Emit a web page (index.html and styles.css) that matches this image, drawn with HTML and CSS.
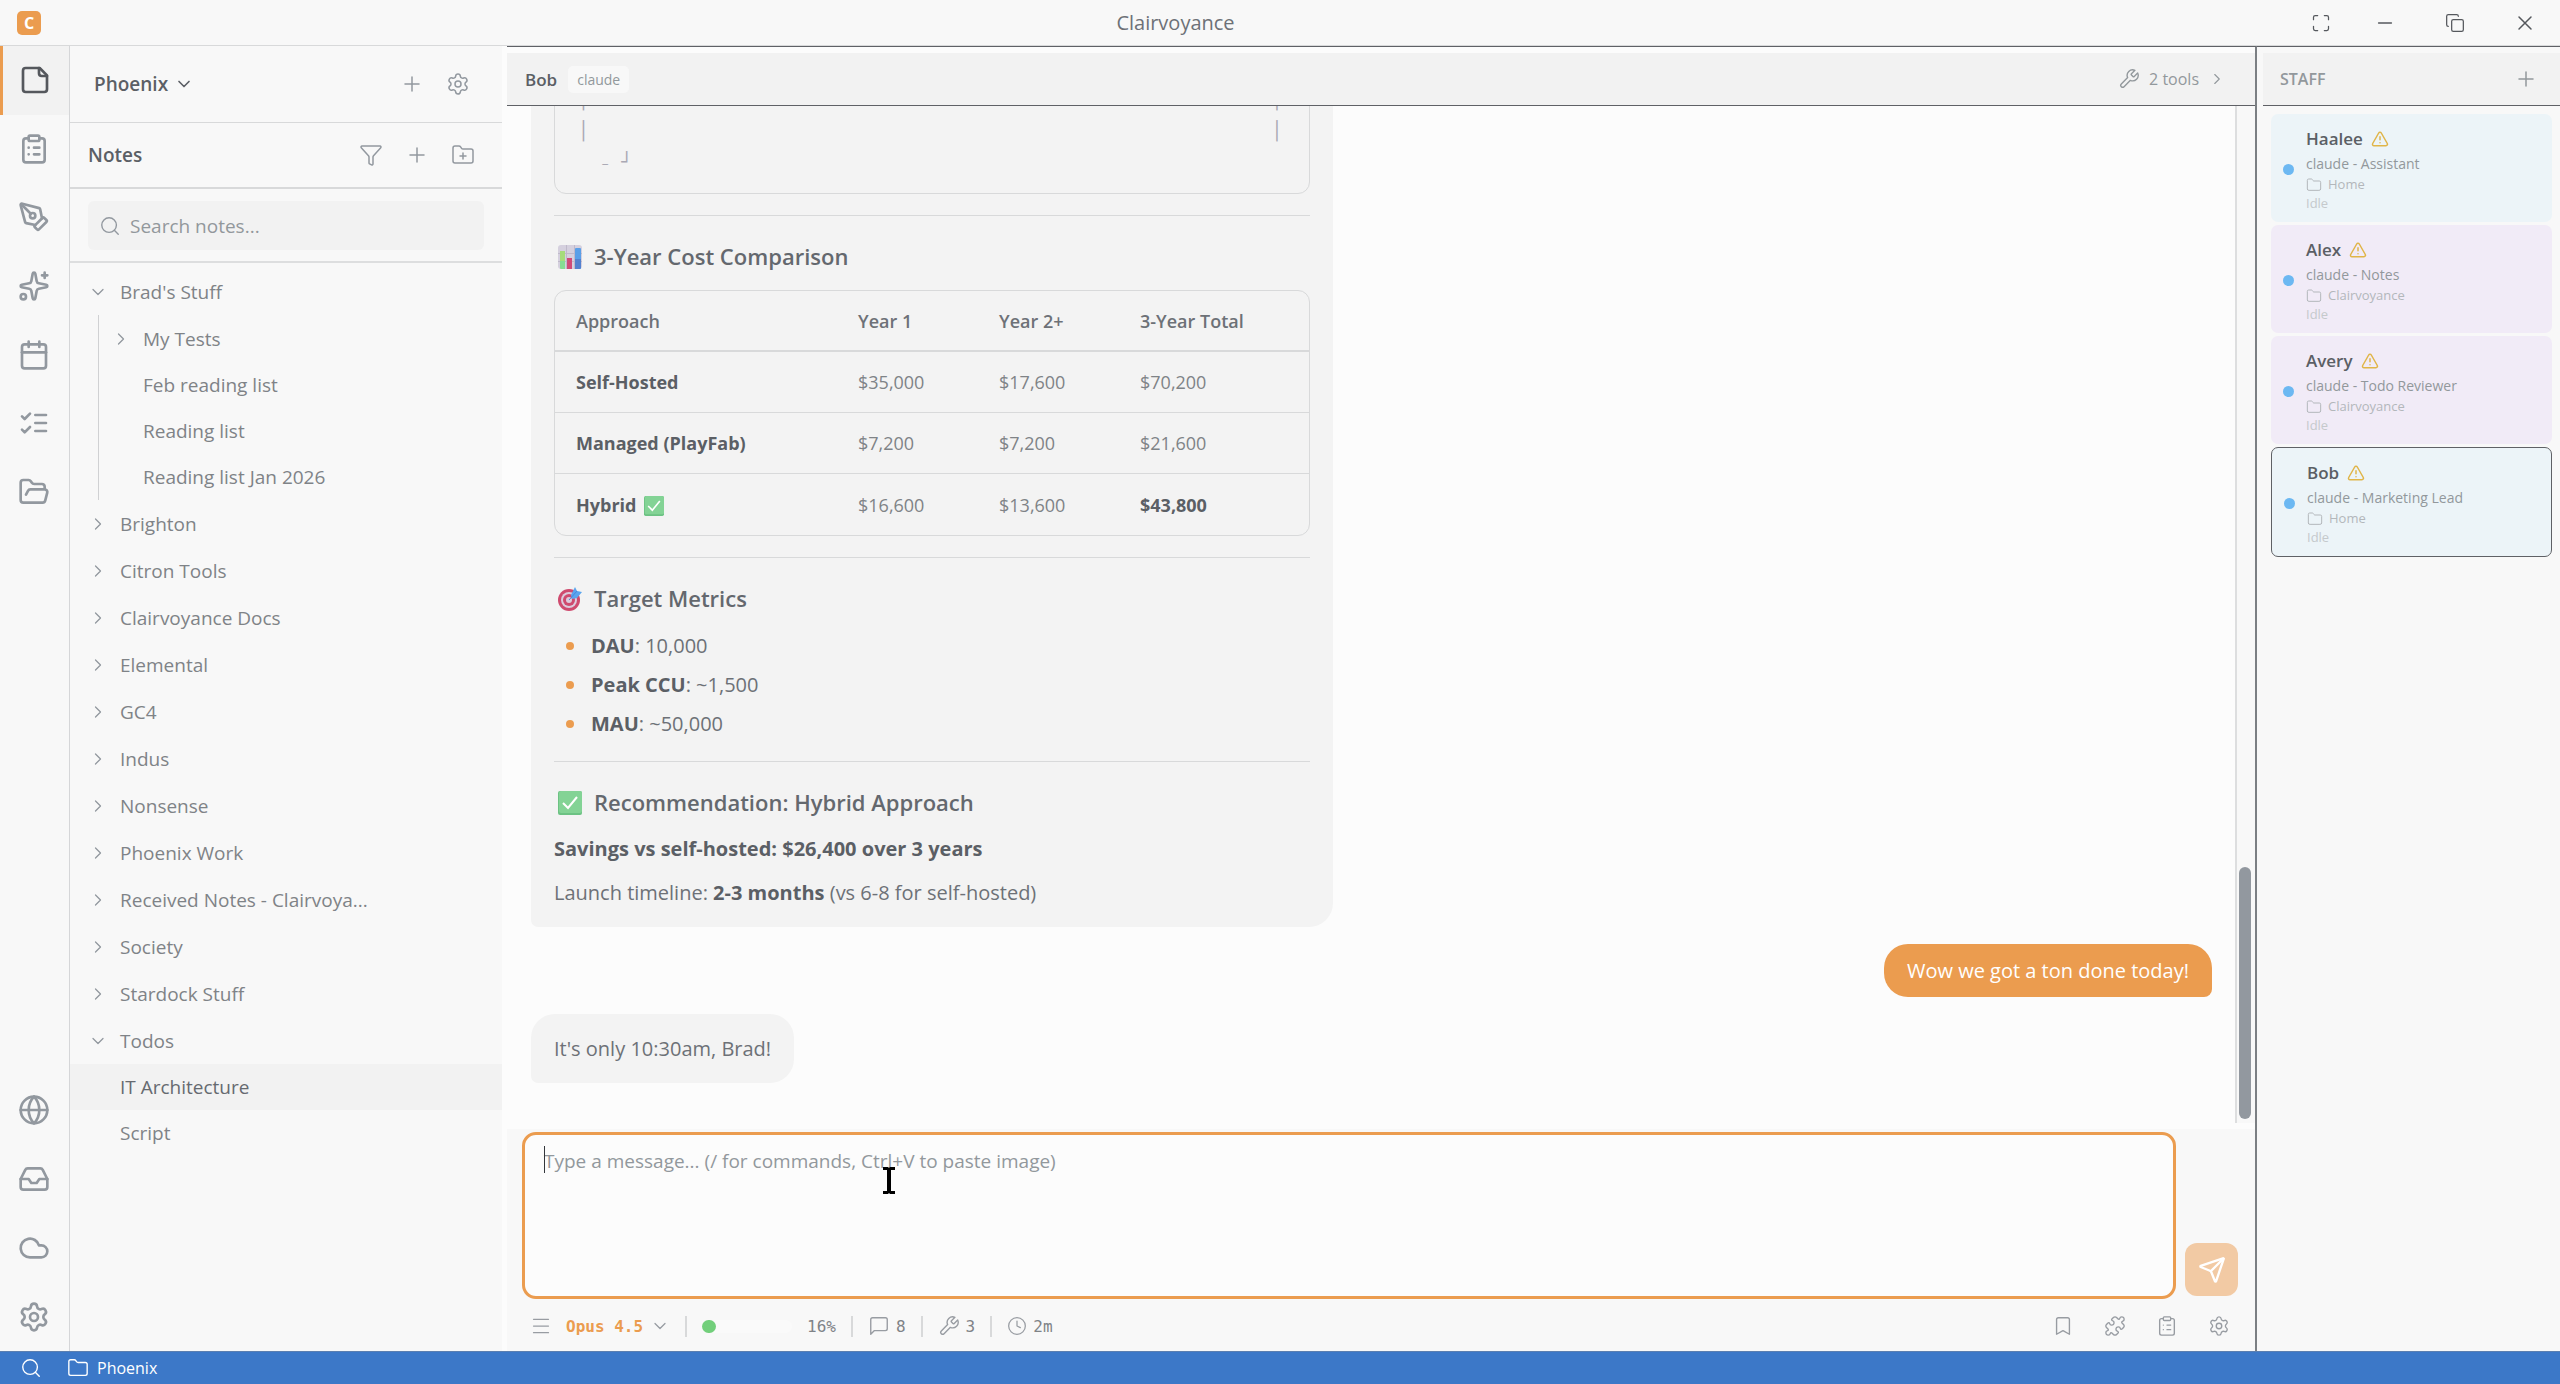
FILE: index.html
```
<!DOCTYPE html>
<html lang="en">
<head>
    <meta charset="UTF-8">
    <meta name="viewport" content="width=device-width, initial-scale=1.0">
    <title>Clairvoyance</title>
    <link rel="stylesheet" href="styles.css">
</head>
<body>
    <!-- Shared icons -->
    <svg class="sprite" aria-hidden="true">
        <symbol id="plus" viewBox="0 0 24 24"><path d="M5 12h14M12 5v14"/></symbol>
        <symbol id="chev-down" viewBox="0 0 24 24"><path d="m6 9 6 6 6-6"/></symbol>
        <symbol id="chev-right" viewBox="0 0 24 24"><path d="m9 18 6-6-6-6"/></symbol>
        <symbol id="note" viewBox="0 0 24 24"><path d="M15.5 3H5a2 2 0 0 0-2 2v14a2 2 0 0 0 2 2h14a2 2 0 0 0 2-2V8.500z"/><path d="M15 3v4a2 2 0 0 0 2 2h4"/></symbol>
        <symbol id="clipboard" viewBox="0 0 24 24"><rect x="8" y="2" width="8" height="4" rx="1"/><path d="M16 4h2a2 2 0 0 1 2 2v14a2 2 0 0 1-2 2H6a2 2 0 0 1-2-2V6a2 2 0 0 1 2-2h2M12 11h4M12 16h4M8 11h.01M8 16h.01"/></symbol>
        <symbol id="pen" viewBox="0 0 24 24"><path d="M15.707 21.293a1 1 0 0 1-1.414 0l-1.586-1.586a1 1 0 0 1 0-1.414l5.586-5.586a1 1 0 0 1 1.414 0l1.586 1.586a1 1 0 0 1 0 1.414z"/><path d="m18 13-1.375-6.874a1 1 0 0 0-.746-.776L3.235 2.028a1 1 0 0 0-1.207 1.207L5.350 15.879a1 1 0 0 0 .776.746L13 18"/><path d="m2.300 2.300 7.286 7.286"/><circle cx="11" cy="11" r="2"/></symbol>
        <symbol id="sparkles" viewBox="0 0 24 24"><path d="M11.017 2.814a1 1 0 0 1 1.966 0l1.051 5.558a2 2 0 0 0 1.594 1.594l5.558 1.051a1 1 0 0 1 0 1.966l-5.558 1.051a2 2 0 0 0-1.594 1.594l-1.051 5.558a1 1 0 0 1-1.966 0l-1.051-5.558a2 2 0 0 0-1.594-1.594l-5.558-1.051a1 1 0 0 1 0-1.966l5.558-1.051a2 2 0 0 0 1.594-1.594z"/><path d="M20 2v4M22 4h-4"/><circle cx="4" cy="20" r="2"/></symbol>
        <symbol id="calendar" viewBox="0 0 24 24"><path d="M8 2v4M16 2v4"/><rect x="3" y="4" width="18" height="18" rx="2"/><path d="M3 10h18"/></symbol>
        <symbol id="checks" viewBox="0 0 24 24"><path d="m3 17 2 2 4-4M3 7l2 2 4-4M13 6h8M13 12h8M13 18h8"/></symbol>
        <symbol id="folder-open" viewBox="0 0 24 24"><path d="m6 14 1.500-2.900A2 2 0 0 1 9.240 10H20a2 2 0 0 1 1.940 2.500l-1.540 6a2 2 0 0 1-1.950 1.500H4a2 2 0 0 1-2-2V5a2 2 0 0 1 2-2h3.900a2 2 0 0 1 1.690.9l.81 1.200a2 2 0 0 0 1.670.9H18a2 2 0 0 1 2 2v2"/></symbol>
        <symbol id="globe" viewBox="0 0 24 24"><circle cx="12" cy="12" r="10"/><path d="M12 2a14.500 14.500 0 0 0 0 20 14.500 14.500 0 0 0 0-20M2 12h20"/></symbol>
        <symbol id="inbox" viewBox="0 0 24 24"><path d="M22 12h-6l-2 3h-4l-2-3H2"/><path d="M5.450 5.110 2 12v6a2 2 0 0 0 2 2h16a2 2 0 0 0 2-2v-6l-3.450-6.890A2 2 0 0 0 16.760 4H7.240a2 2 0 0 0-1.790 1.110z"/></symbol>
        <symbol id="cloud" viewBox="0 0 24 24"><path d="M17.500 19H9a7 7 0 1 1 6.710-9h1.790a4.500 4.500 0 1 1 0 9Z"/></symbol>
        <symbol id="gear" viewBox="0 0 24 24"><path d="M9.671 4.136a2.340 2.340 0 0 1 4.659 0 2.340 2.340 0 0 0 3.319 1.915 2.340 2.340 0 0 1 2.330 4.033 2.340 2.340 0 0 0 0 3.831 2.340 2.340 0 0 1-2.330 4.033 2.340 2.340 0 0 0-3.319 1.915 2.340 2.340 0 0 1-4.659 0 2.340 2.340 0 0 0-3.320-1.915 2.340 2.340 0 0 1-2.330-4.033 2.340 2.340 0 0 0 0-3.831A2.340 2.340 0 0 1 6.350 6.051a2.340 2.340 0 0 0 3.319-1.915"/><circle cx="12" cy="12" r="3"/></symbol>
        <symbol id="funnel" viewBox="0 0 24 24"><path d="M10 20a1 1 0 0 0 .553.895l2 1A1 1 0 0 0 14 21v-7a2 2 0 0 1 .517-1.341L21.740 4.670A1 1 0 0 0 21 3H3a1 1 0 0 0-.742 1.670l7.225 7.989A2 2 0 0 1 10 14z"/></symbol>
        <symbol id="folder" viewBox="0 0 24 24"><path d="M20 20a2 2 0 0 0 2-2V8a2 2 0 0 0-2-2h-7.900a2 2 0 0 1-1.690-.9L9.600 3.900A2 2 0 0 0 7.930 3H4a2 2 0 0 0-2 2v13a2 2 0 0 0 2 2Z"/></symbol>
        <symbol id="folder-plus" viewBox="0 0 24 24"><path d="M12 10v6M9 13h6"/><path d="M20 20a2 2 0 0 0 2-2V8a2 2 0 0 0-2-2h-7.900a2 2 0 0 1-1.690-.9L9.600 3.900A2 2 0 0 0 7.930 3H4a2 2 0 0 0-2 2v13a2 2 0 0 0 2 2Z"/></symbol>
        <symbol id="search" viewBox="0 0 24 24"><circle cx="11" cy="11" r="8"/><path d="m21 21-4.300-4.300"/></symbol>
        <symbol id="wrench" viewBox="0 0 24 24"><path d="M14.700 6.300a1 1 0 0 0 0 1.400l1.600 1.600a1 1 0 0 0 1.400 0l3.770-3.770a6 6 0 0 1-7.940 7.940l-6.910 6.910a2.120 2.120 0 0 1-3-3l6.910-6.910a6 6 0 0 1 7.940-7.940l-3.760 3.760z"/></symbol>
        <symbol id="expand" viewBox="0 0 24 24"><path d="M8 3H5a2 2 0 0 0-2 2v3M21 8V5a2 2 0 0 0-2-2h-3M3 16v3a2 2 0 0 0 2 2h3M16 21h3a2 2 0 0 0 2-2v-3"/></symbol>
        <symbol id="minus" viewBox="0 0 24 24"><path d="M5 12h14"/></symbol>
        <symbol id="copy" viewBox="0 0 24 24"><rect x="8" y="8" width="14" height="14" rx="2"/><path d="M4 16c-1.100 0-2-.9-2-2V4c0-1.100.9-2 2-2h10c1.100 0 2 .9 2 2"/></symbol>
        <symbol id="close" viewBox="0 0 24 24"><path d="M18 6 6 18M6 6l12 12"/></symbol>
        <symbol id="alert" viewBox="0 0 24 24"><path d="m21.730 18-8-14a2 2 0 0 0-3.480 0l-8 14A2 2 0 0 0 4 21h16a2 2 0 0 0 1.730-3M12 9v4M12 17h.01"/></symbol>
        <symbol id="send" viewBox="0 0 24 24"><path d="M14.536 21.686a.5.5 0 0 0 .937-.024l6.500-19a.496.496 0 0 0-.635-.635l-19 6.500a.5.5 0 0 0-.024.937l7.930 3.180a2 2 0 0 1 1.112 1.110z"/><path d="m21.854 2.147-10.940 10.939"/></symbol>
        <symbol id="menu" viewBox="0 0 24 24"><path d="M3 4h18M3 12h18M3 20h18"/></symbol>
        <symbol id="chat" viewBox="0 0 24 24"><path d="M21 15a2 2 0 0 1-2 2H7l-4 4V5a2 2 0 0 1 2-2h14a2 2 0 0 1 2 2z"/></symbol>
        <symbol id="clock" viewBox="0 0 24 24"><circle cx="12" cy="12" r="10"/><path d="M12 6v6l4 2"/></symbol>
        <symbol id="bookmark" viewBox="0 0 24 24"><path d="m19 21-7-4-7 4V5a2 2 0 0 1 2-2h10a2 2 0 0 1 2 2z"/></symbol>
        <symbol id="puzzle" viewBox="0 0 24 24"><path d="M15.390 4.390a1 1 0 0 0 1.680-.474 2.500 2.500 0 1 1 3.014 3.015 1 1 0 0 0-.474 1.680l1.683 1.682a2.414 2.414 0 0 1 0 3.414L19.610 15.390a1 1 0 0 1-1.680-.474 2.500 2.500 0 1 0-3.014 3.015 1 1 0 0 1 .474 1.680l-1.683 1.682a2.414 2.414 0 0 1-3.414 0L8.610 19.610a1 1 0 0 0-1.680.474 2.500 2.500 0 1 1-3.014-3.015 1 1 0 0 0 .474-1.680l-1.683-1.682a2.414 2.414 0 0 1 0-3.414L4.390 8.610a1 1 0 0 1 1.680.474 2.500 2.500 0 1 0 3.014-3.015 1 1 0 0 1-.474-1.680l1.683-1.682a2.414 2.414 0 0 1 3.414 0z"/></symbol>
        <symbol id="check-box" viewBox="0 0 24 24"><rect width="24" height="24" rx="2" fill="#6cc283" stroke="none"/><rect x="1" width="23" height="22" rx="2" fill="#83d395" stroke="none"/><path d="m5 12 5 5 9-11" fill="none" stroke="#fff" stroke-width="2"/></symbol>
        <symbol id="chart" viewBox="0 0 24 24"><g stroke="none"><rect width="24" height="24" rx="3" fill="#d5d0de"/><path d="M0 8h24v1H0zM0 16h24v1H0zM8 0h1v24H8zM16 0h1v24h-1z" fill="#bfb9ca"/><path d="M2 6h5v18H3l-1-1z" fill="#a6dc7a"/><path d="M2 16h5v8H3l-1-1z" fill="#86dc94"/><rect x="9" y="13" width="5" height="11" fill="#d04a78"/><rect x="17" y="3" width="6" height="21" rx="1" fill="#5a9fe8"/><path d="M17 14h6v9l-1 1h-5z" fill="#5381cf"/></g></symbol>
        <symbol id="target" viewBox="0 0 24 24"><g stroke="none"><circle cx="11" cy="13" r="11" fill="#cf4a6e"/><circle cx="11" cy="13" r="8" fill="#dccbdc"/><circle cx="11" cy="13" r="6" fill="#cf4a6e"/><circle cx="11" cy="13" r="3" fill="#dccbdc"/><path d="m13 8 4-8 2 4 5 1-5 6-5 1z" fill="#5aa5ee"/></g><path d="m11 13 8-9" stroke="#4b86dc" stroke-width="1"/></symbol>
    </svg>

    <header class="titlebar">
        <span class="logo">C</span>
        <h1 class="app-title">Clairvoyance</h1>
        <div class="window-buttons">
            <button class="expand" aria-label="Full screen"><svg class="icon s20"><use href="#expand"/></svg></button>
            <button aria-label="Minimize"><svg class="icon s22"><use href="#minus"/></svg></button>
            <button aria-label="Restore"><svg class="icon s20"><use href="#copy"/></svg></button>
            <button aria-label="Close"><svg class="icon s24"><use href="#close"/></svg></button>
        </div>
    </header>

    <div class="workspace">
        <nav class="rail" aria-label="Views">
            <div class="rail-top">
                <button class="active" aria-label="Notes"><svg class="icon s32"><use href="#note"/></svg></button>
                <button aria-label="Tasks"><svg class="icon s32"><use href="#clipboard"/></svg></button>
                <button aria-label="Draw"><svg class="icon s32"><use href="#pen"/></svg></button>
                <button aria-label="Generate"><svg class="icon s32"><use href="#sparkles"/></svg></button>
                <button aria-label="Calendar"><svg class="icon s32"><use href="#calendar"/></svg></button>
                <button aria-label="Todos"><svg class="icon s32"><use href="#checks"/></svg></button>
                <button aria-label="Files"><svg class="icon s32"><use href="#folder-open"/></svg></button>
            </div>
            <div class="rail-bottom">
                <button aria-label="Web"><svg class="icon s32"><use href="#globe"/></svg></button>
                <button aria-label="Inbox"><svg class="icon s32"><use href="#inbox"/></svg></button>
                <button aria-label="Cloud"><svg class="icon s32"><use href="#cloud"/></svg></button>
                <button aria-label="Settings"><svg class="icon s32"><use href="#gear"/></svg></button>
            </div>
        </nav>

        <aside class="sidebar">
            <div class="side-head project">
                <button class="project-name">Phoenix <svg class="icon s20"><use href="#chev-down"/></svg></button>
                <button class="tool" aria-label="Add"><svg class="icon s24"><use href="#plus"/></svg></button>
                <button class="tool" aria-label="Project settings"><svg class="icon s24"><use href="#gear"/></svg></button>
            </div>
            <div class="side-head notes">
                <h2>Notes</h2>
                <button class="tool" aria-label="Filter"><svg class="icon s24"><use href="#funnel"/></svg></button>
                <button class="tool" aria-label="New note"><svg class="icon s24"><use href="#plus"/></svg></button>
                <button class="tool" aria-label="New folder"><svg class="icon s24"><use href="#folder-plus"/></svg></button>
            </div>
            <div class="search-wrap">
                <label class="search"><svg class="icon s22"><use href="#search"/></svg><input type="text" placeholder="Search notes..." aria-label="Search notes"></label>
            </div>
            <ul class="tree">
                <li><a href="#"><svg class="icon s20"><use href="#chev-down"/></svg><span>Brad's Stuff</span></a>
                    <ul class="branch">
                        <li><a href="#"><svg class="icon s20"><use href="#chev-right"/></svg><span>My Tests</span></a></li>
                        <li><a href="#" class="leaf"><span>Feb reading list</span></a></li>
                        <li><a href="#" class="leaf"><span>Reading list</span></a></li>
                        <li><a href="#" class="leaf"><span>Reading list Jan 2026</span></a></li>
                    </ul>
                </li>
                <li><a href="#"><svg class="icon s20"><use href="#chev-right"/></svg><span>Brighton</span></a></li>
                <li><a href="#"><svg class="icon s20"><use href="#chev-right"/></svg><span>Citron Tools</span></a></li>
                <li><a href="#"><svg class="icon s20"><use href="#chev-right"/></svg><span>Clairvoyance Docs</span></a></li>
                <li><a href="#"><svg class="icon s20"><use href="#chev-right"/></svg><span>Elemental</span></a></li>
                <li><a href="#"><svg class="icon s20"><use href="#chev-right"/></svg><span>GC4</span></a></li>
                <li><a href="#"><svg class="icon s20"><use href="#chev-right"/></svg><span>Indus</span></a></li>
                <li><a href="#"><svg class="icon s20"><use href="#chev-right"/></svg><span>Nonsense</span></a></li>
                <li><a href="#"><svg class="icon s20"><use href="#chev-right"/></svg><span>Phoenix Work</span></a></li>
                <li><a href="#"><svg class="icon s20"><use href="#chev-right"/></svg><span>Received Notes - Clairvoya...</span></a></li>
                <li><a href="#"><svg class="icon s20"><use href="#chev-right"/></svg><span>Society</span></a></li>
                <li><a href="#"><svg class="icon s20"><use href="#chev-right"/></svg><span>Stardock Stuff</span></a></li>
                <li><a href="#"><svg class="icon s20"><use href="#chev-down"/></svg><span>Todos</span></a></li>
                <li><a href="#" class="leaf selected"><span>IT Architecture</span></a></li>
                <li><a href="#" class="leaf"><span>Script</span></a></li>
            </ul>
        </aside>

        <main class="chat">
            <div class="panel-head">
                <h2 class="chat-name">Bob</h2>
                <span class="chip">claude</span>
                <button class="tools-button"><svg class="icon s22"><use href="#wrench"/></svg>2 tools<svg class="icon s18"><use href="#chev-right"/></svg></button>
            </div>

            <div class="chat-body">
                <div class="messages">
                    <article class="bubble report">
                        <pre class="code">│                                                               │
│                                                               │
  ₋ ┘</pre>
                        <hr>
                        <h3><svg class="emoji"><use href="#chart"/></svg>3-Year Cost Comparison</h3>
                        <table>
                            <thead>
                                <tr><th>Approach</th><th>Year 1</th><th>Year 2+</th><th>3-Year Total</th></tr>
                            </thead>
                            <tbody>
                                <tr><td><strong>Self-Hosted</strong></td><td>$35,000</td><td>$17,600</td><td>$70,200</td></tr>
                                <tr><td><strong>Managed (PlayFab)</strong></td><td>$7,200</td><td>$7,200</td><td>$21,600</td></tr>
                                <tr><td><strong>Hybrid</strong> <svg class="emoji small"><use href="#check-box"/></svg></td><td>$16,600</td><td>$13,600</td><td><strong>$43,800</strong></td></tr>
                            </tbody>
                        </table>
                        <hr>
                        <h3><svg class="emoji"><use href="#target"/></svg>Target Metrics</h3>
                        <ul class="metrics">
                            <li><strong>DAU</strong>: 10,000</li>
                            <li><strong>Peak CCU</strong>: ~1,500</li>
                            <li><strong>MAU</strong>: ~50,000</li>
                        </ul>
                        <hr>
                        <h3><svg class="emoji"><use href="#check-box"/></svg>Recommendation: Hybrid Approach</h3>
                        <p><strong>Savings vs self-hosted: $26,400 over 3 years</strong></p>
                        <p>Launch timeline: <strong>2-3 months</strong> (vs 6-8 for self-hosted)</p>
                    </article>
                    <article class="bubble mine">Wow we got a ton done today!</article>
                    <article class="bubble reply">It's only 10:30am, Brad!</article>
                </div>
                <div class="scrollbar"><div class="thumb"></div></div>
            </div>

            <div class="composer">
                <form class="compose-row">
                    <div class="input-wrap">
                        <textarea aria-label="Message" placeholder="Type a message... (/ for commands, Ctrl+V to paste image)"></textarea>
                        <span class="caret"></span>
                        <svg class="pointer" viewBox="0 0 12 27"><path d="M0 0h5l1 1 1-1h5v3H8v21h4v3H7l-1-1-1 1H0v-3h4V3H0z"/></svg>
                    </div>
                    <button type="button" class="send" aria-label="Send"><svg class="icon s28"><use href="#send"/></svg></button>
                </form>
                <div class="status-row">
                    <button aria-label="Menu"><svg class="icon s20"><use href="#menu"/></svg></button>
                    <button class="model">Opus 4.5<svg class="icon s20"><use href="#chev-down"/></svg></button>
                    <span class="divider"></span>
                    <span class="meter"><span class="meter-fill" style="width: 16%"></span></span>
                    <span>16%</span>
                    <span class="divider"></span>
                    <span class="stat"><svg class="icon s22"><use href="#chat"/></svg>8</span>
                    <span class="divider"></span>
                    <span class="stat"><svg class="icon s22"><use href="#wrench"/></svg>3</span>
                    <span class="divider"></span>
                    <span class="stat"><svg class="icon s20"><use href="#clock"/></svg>2m</span>
                    <div class="quick">
                        <button aria-label="Bookmarks"><svg class="icon s22"><use href="#bookmark"/></svg></button>
                        <button aria-label="Plugins"><svg class="icon s22"><use href="#puzzle"/></svg></button>
                        <button aria-label="Plan"><svg class="icon s22"><use href="#clipboard"/></svg></button>
                        <button aria-label="Chat settings"><svg class="icon s22"><use href="#gear"/></svg></button>
                    </div>
                </div>
            </div>
        </main>

        <aside class="staff">
            <div class="panel-head">
                <h2 class="staff-title">STAFF</h2>
                <button aria-label="Add staff"><svg class="icon s24"><use href="#plus"/></svg></button>
            </div>
            <div class="cards">
                <div class="card blue">
                    <span class="dot"></span>
                    <div>
                        <h3>Haalee <svg class="icon s18"><use href="#alert"/></svg></h3>
                        <p class="role">claude - Assistant</p>
                        <p class="place"><svg class="icon s16"><use href="#folder"/></svg>Home</p>
                        <p class="state">Idle</p>
                    </div>
                </div>
                <div class="card purple">
                    <span class="dot"></span>
                    <div>
                        <h3>Alex <svg class="icon s18"><use href="#alert"/></svg></h3>
                        <p class="role">claude - Notes</p>
                        <p class="place"><svg class="icon s16"><use href="#folder"/></svg>Clairvoyance</p>
                        <p class="state">Idle</p>
                    </div>
                </div>
                <div class="card purple">
                    <span class="dot"></span>
                    <div>
                        <h3>Avery <svg class="icon s18"><use href="#alert"/></svg></h3>
                        <p class="role">claude - Todo Reviewer</p>
                        <p class="place"><svg class="icon s16"><use href="#folder"/></svg>Clairvoyance</p>
                        <p class="state">Idle</p>
                    </div>
                </div>
                <div class="card blue current">
                    <span class="dot"></span>
                    <div>
                        <h3>Bob <svg class="icon s18"><use href="#alert"/></svg></h3>
                        <p class="role">claude - Marketing Lead</p>
                        <p class="place"><svg class="icon s16"><use href="#folder"/></svg>Home</p>
                        <p class="state">Idle</p>
                    </div>
                </div>
            </div>
        </aside>
    </div>

    <footer class="statusbar">
        <button aria-label="Search"><svg class="icon s22"><use href="#search"/></svg></button>
        <button><svg class="icon s22"><use href="#folder"/></svg>Phoenix</button>
    </footer>
</body>
</html>
```

FILE: styles.css
```
* {
    margin: 0;
    padding: 0;
    box-sizing: border-box;
}

body {
    font-family: "Segoe UI", "Open Sans", "Noto Sans", sans-serif;
    font-size: 20px;
    height: 100vh;
    display: flex;
    flex-direction: column;
    background: #fcfcfc;
    color: #6d7177;
    overflow: hidden;
}

button {
    border: none;
    background: none;
    font: inherit;
    color: inherit;
    display: flex;
    align-items: center;
    justify-content: center;
}

a {
    color: inherit;
    text-decoration: none;
}

ul {
    list-style: none;
}

/* Icons */
.sprite {
    display: none;
}

.icon {
    fill: none;
    stroke: currentColor;
    stroke-width: 2;
    stroke-linecap: round;
    stroke-linejoin: round;
    flex: none;
}

.s16 { width: 16px; height: 16px; }
.s18 { width: 18px; height: 18px; }
.s20 { width: 20px; height: 20px; }
.s22 { width: 22px; height: 22px; }
.s24 { width: 24px; height: 24px; }
.s28 { width: 28px; height: 28px; }
.s32 { width: 32px; height: 32px; }

/* Title bar */
.titlebar {
    height: 46px;
    flex: none;
    display: flex;
    align-items: center;
    background: #f8f8f8;
    border-bottom: 1px solid #d8d9da;
    padding-left: 17px;
}

.logo {
    width: 24px;
    height: 24px;
    border-radius: 5px;
    background: #eb9c4f;
    color: #fff;
    font-size: 16px;
    line-height: 24px;
    font-weight: 700;
    text-align: center;
}

.app-title {
    flex: 1;
    padding-left: 18px;
    text-align: center;
    font-size: 20px;
    font-weight: 400;
}

.window-buttons {
    display: flex;
    color: #55585d;
}

.window-buttons button {
    width: 70px;
    height: 45px;
}

.window-buttons .expand {
    width: 58px;
}

.workspace {
    flex: 1;
    min-height: 0;
    display: flex;
}

/* Icon rail */
.rail {
    width: 70px;
    flex: none;
    display: flex;
    flex-direction: column;
    justify-content: space-between;
    background: #f8f8f8;
    border-right: 1px solid #d5d6d8;
    color: #92989f;
}

.rail-top,
.rail-bottom {
    display: grid;
    grid-auto-rows: 1fr;
}

.rail-top {
    height: 480px;
}

.rail-bottom {
    height: 275px;
}

.rail button {
    border-left: 3px solid transparent;
    padding-right: 4px;
}

.rail .active {
    background: #f2f2f2;
    border-left-color: #eb9c4f;
    color: #55585d;
    padding-right: 2px;
}

/* Notes sidebar */
.sidebar {
    width: 432px;
    flex: none;
    background: #f8f8f8;
    color: #7f8387;
}

.side-head {
    display: flex;
    align-items: center;
    padding: 0 16px 0 18px;
    border-bottom: 1px solid #d8d9da;
}

.project {
    height: 77px;
    padding: 0 21px 0 24px;
}

.notes {
    height: 66px;
    border-bottom-width: 2px;
}

.project-name,
.notes h2 {
    margin-right: auto;
    font-size: 19px;
    font-weight: 600;
    color: #5b5f65;
    gap: 6px;
}

.tool {
    width: 46px;
    height: 46px;
    color: #92989f;
}

.tool .icon,
.panel-head .icon,
.status-row .icon,
.tree .icon,
.search .icon,
.window-buttons .icon {
    stroke-width: 1.5;
}

.search-wrap {
    padding: 12px 18px 11px;
    border-bottom: 2px solid #dddedf;
}

.search {
    height: 49px;
    display: flex;
    align-items: center;
    gap: 9px;
    padding: 0 11px;
    border-radius: 6px;
    background: #f2f2f2;
    color: #92989f;
}

.search input {
    flex: 1;
    border: none;
    background: none;
    outline: none;
    font: inherit;
    font-size: 19px;
}

input::placeholder,
textarea::placeholder {
    color: #92989c;
    opacity: 1;
}

.tree {
    padding-top: 5px;
    font-size: 19px;
}

.tree a {
    height: 47px;
    display: flex;
    align-items: center;
    gap: 12px;
    padding-left: 18px;
}

.tree .leaf {
    height: 46px;
    padding-left: 50px;
}

.tree .icon {
    color: #92989f;
}

.tree .selected {
    background: #f2f2f2;
    color: #666a70;
}

.branch {
    margin-left: 28px;
    border-left: 1px solid #d0d1d3;
}

.branch a {
    padding-left: 12px;
}

.branch .leaf {
    padding-left: 44px;
}

/* Chat panel */
.chat {
    flex: 1;
    min-width: 0;
    margin-left: 5px;
    display: flex;
    flex-direction: column;
    border-top: 1px solid #5f6166;
    border-right: 2px solid #7b7f83;
}

.panel-head {
    margin-top: 6px;
    height: 53px;
    flex: none;
    display: flex;
    align-items: center;
    background: #f2f2f2;
    border-bottom: 1px solid #5f6166;
    color: #92989c;
}

.chat .panel-head {
    padding: 0 29px 0 18px;
    gap: 11px;
}

.chat-name {
    font-size: 17px;
    font-weight: 600;
    color: #5b5f65;
}

.chip {
    padding: 0 9px;
    border-radius: 5px;
    background: #f8f8f8;
    font-size: 14px;
    line-height: 27px;
}

.tools-button {
    margin-left: auto;
    gap: 9px;
    font-size: 16px;
}

.chat-body {
    flex: 1;
    min-height: 0;
    display: flex;
    margin-bottom: 6px;
}

.messages {
    flex: 1;
    min-width: 0;
    overflow: hidden;
    display: flex;
    flex-direction: column;
    justify-content: flex-end;
    gap: 17px;
    padding: 0 23px 40px 24px;
}

.bubble {
    flex: none;
    border-radius: 24px 24px 24px 7px;
    background: #f3f3f3;
    padding: 16px 23px;
    align-self: flex-start;
    font-size: 20px;
    line-height: 37px;
}

.bubble strong {
    font-weight: 700;
    color: #5b5f65;
}

.mine {
    align-self: flex-end;
    border-radius: 24px 24px 8px 24px;
    background: #eb9c4f;
    color: #fff;
    padding: 8px 23px;
}

.report {
    width: 802px;
}

.report hr {
    border: none;
    border-top: 1px solid #d8d9da;
    margin: 18px 0;
}

.report h3 {
    display: flex;
    align-items: center;
    gap: 12px;
    margin: 21px 0 8px;
    padding-left: 4px;
    font-size: 22px;
    font-weight: 600;
    line-height: 39px;
    color: #64686e;
}

.emoji {
    width: 24px;
    height: 24px;
}

.emoji.small {
    width: 20px;
    height: 20px;
    vertical-align: -4px;
    margin-left: 3px;
}

.code {
    height: 200px;
    display: flex;
    align-items: flex-end;
    margin-bottom: 21px;
    border: 1px solid #d8d9da;
    border-radius: 12px;
    padding: 16px 23px;
    font-family: "DejaVu Sans Mono", monospace;
    font-size: 18px;
    line-height: 31px;
    color: #a9a8b4;
    overflow: hidden;
}

.report table {
    width: 100%;
    margin: 14px 0 21px;
    border: 1px solid #d8d9da;
    border-radius: 12px;
    border-spacing: 0;
    font-size: 18px;
    line-height: 28px;
    color: #7f8387;
}

.report th,
.report td {
    height: 61px;
    padding: 0 21px;
    text-align: left;
    border-bottom: 1px solid #d8d9da;
}

.report th {
    font-weight: 600;
    color: #6d7177;
    border-bottom-width: 2px;
}

.report th:first-child {
    width: 282px;
}

.report th:nth-child(2),
.report th:nth-child(3) {
    width: 141px;
}

.report tr:last-child td {
    border-bottom: none;
}

.metrics li {
    display: flex;
    align-items: center;
    white-space: pre;
    line-height: 39px;
    padding-left: 12px;
}

.metrics li::before {
    content: "";
    width: 8px;
    height: 8px;
    margin-right: 17px;
    border-radius: 50%;
    background: #eb9c4f;
}

.report p + p {
    margin-top: 7px;
}

.scrollbar {
    width: 20px;
    flex: none;
    display: flex;
    flex-direction: column;
    justify-content: flex-end;
    background: #f8f8f8;
    border-left: 2px solid #dddedf;
    padding: 4px 4px 4px 2px;
}

.thumb {
    height: 25%;
    border-radius: 6px;
    background: #92989f;
}

/* Composer */
.composer {
    flex: none;
    background: #f8f8f8;
}

.compose-row {
    display: flex;
    align-items: flex-end;
    gap: 9px;
    padding: 3px 17px 0 15px;
}

.input-wrap {
    flex: 1;
    position: relative;
    display: flex;
}

.input-wrap textarea {
    flex: 1;
    height: 167px;
    resize: none;
    border: 3px solid #eb9c4f;
    border-radius: 14px;
    outline: none;
    background: #fcfcfc;
    padding: 12px 19px;
    font: inherit;
    font-size: 19px;
    line-height: 29px;
}

.caret {
    position: absolute;
    left: 22px;
    top: 14px;
    width: 1px;
    height: 27px;
    background: #33363b;
}

.pointer {
    position: absolute;
    left: 361px;
    top: 35px;
    width: 12px;
    height: 27px;
}

.send {
    width: 53px;
    height: 53px;
    margin-bottom: 3px;
    border-radius: 12px;
    background: #f2caa4;
    color: #fff;
}

.status-row {
    height: 52px;
    display: flex;
    align-items: center;
    gap: 15px;
    padding: 2px 10px 0 24px;
    font-family: "DejaVu Sans Mono", monospace;
    font-size: 16px;
    color: #7f8387;
}

.status-row .icon {
    color: #989ca2;
}

.model {
    font-weight: 700;
    color: #eb9c4f;
    gap: 7px;
}

.divider {
    width: 2px;
    height: 21px;
    background: #d8d9da;
}

.meter {
    width: 90px;
    height: 13px;
    border-radius: 7px;
    background: #fafafa;
}

.meter-fill {
    display: block;
    height: 100%;
    border-radius: 7px;
    background: #72cf7b;
}

.stat {
    display: flex;
    align-items: center;
    gap: 6px;
}

.quick {
    margin-left: auto;
    display: flex;
}

.quick button {
    width: 52px;
    height: 40px;
}

/* Staff panel */
.staff {
    width: 303px;
    flex: none;
    background: #f8f8f8;
    border-top: 1px solid #5f6166;
}

.staff .panel-head {
    margin-left: 6px;
    justify-content: space-between;
    padding: 0 22px 0 17px;
}

.staff-title {
    font-size: 16px;
    font-weight: 600;
}

.cards {
    display: flex;
    flex-direction: column;
    gap: 3px;
    padding: 8px 8px 0 14px;
}

.card {
    display: flex;
    align-items: center;
    gap: 12px;
    padding: 11px 12px 9px;
    border-radius: 7px;
    color: #92989c;
}

.blue {
    background: #ecf4f8;
}

.purple {
    background: #f1ebf7;
}

.current {
    border: 1px solid #5f6166;
}

.dot {
    width: 11px;
    height: 11px;
    border-radius: 50%;
    background: #6cb8f2;
}

.card h3 {
    display: flex;
    align-items: center;
    gap: 8px;
    font-size: 17px;
    line-height: 27px;
    font-weight: 600;
    color: #5b5f65;
}

.card h3 .icon {
    color: #e0b548;
}

.role {
    font-size: 14px;
    line-height: 22px;
    padding-top: 1px;
}

.place {
    display: flex;
    align-items: center;
    gap: 6px;
    font-size: 13px;
    line-height: 19px;
    color: #b3b7bb;
}

.place .icon {
    stroke-width: 1.5;
}

.state {
    font-size: 13px;
    line-height: 19px;
    color: #c5c9cc;
}

/* Bottom bar */
.statusbar {
    height: 33px;
    flex: none;
    display: flex;
    align-items: center;
    gap: 25px;
    padding-left: 20px;
    border-top: 1px solid #5b7fb0;
    background: #3c78c8;
    color: #fff;
    font-size: 16px;
}

.statusbar button {
    gap: 8px;
}

.statusbar .icon {
    stroke-width: 1.5;
}
```
